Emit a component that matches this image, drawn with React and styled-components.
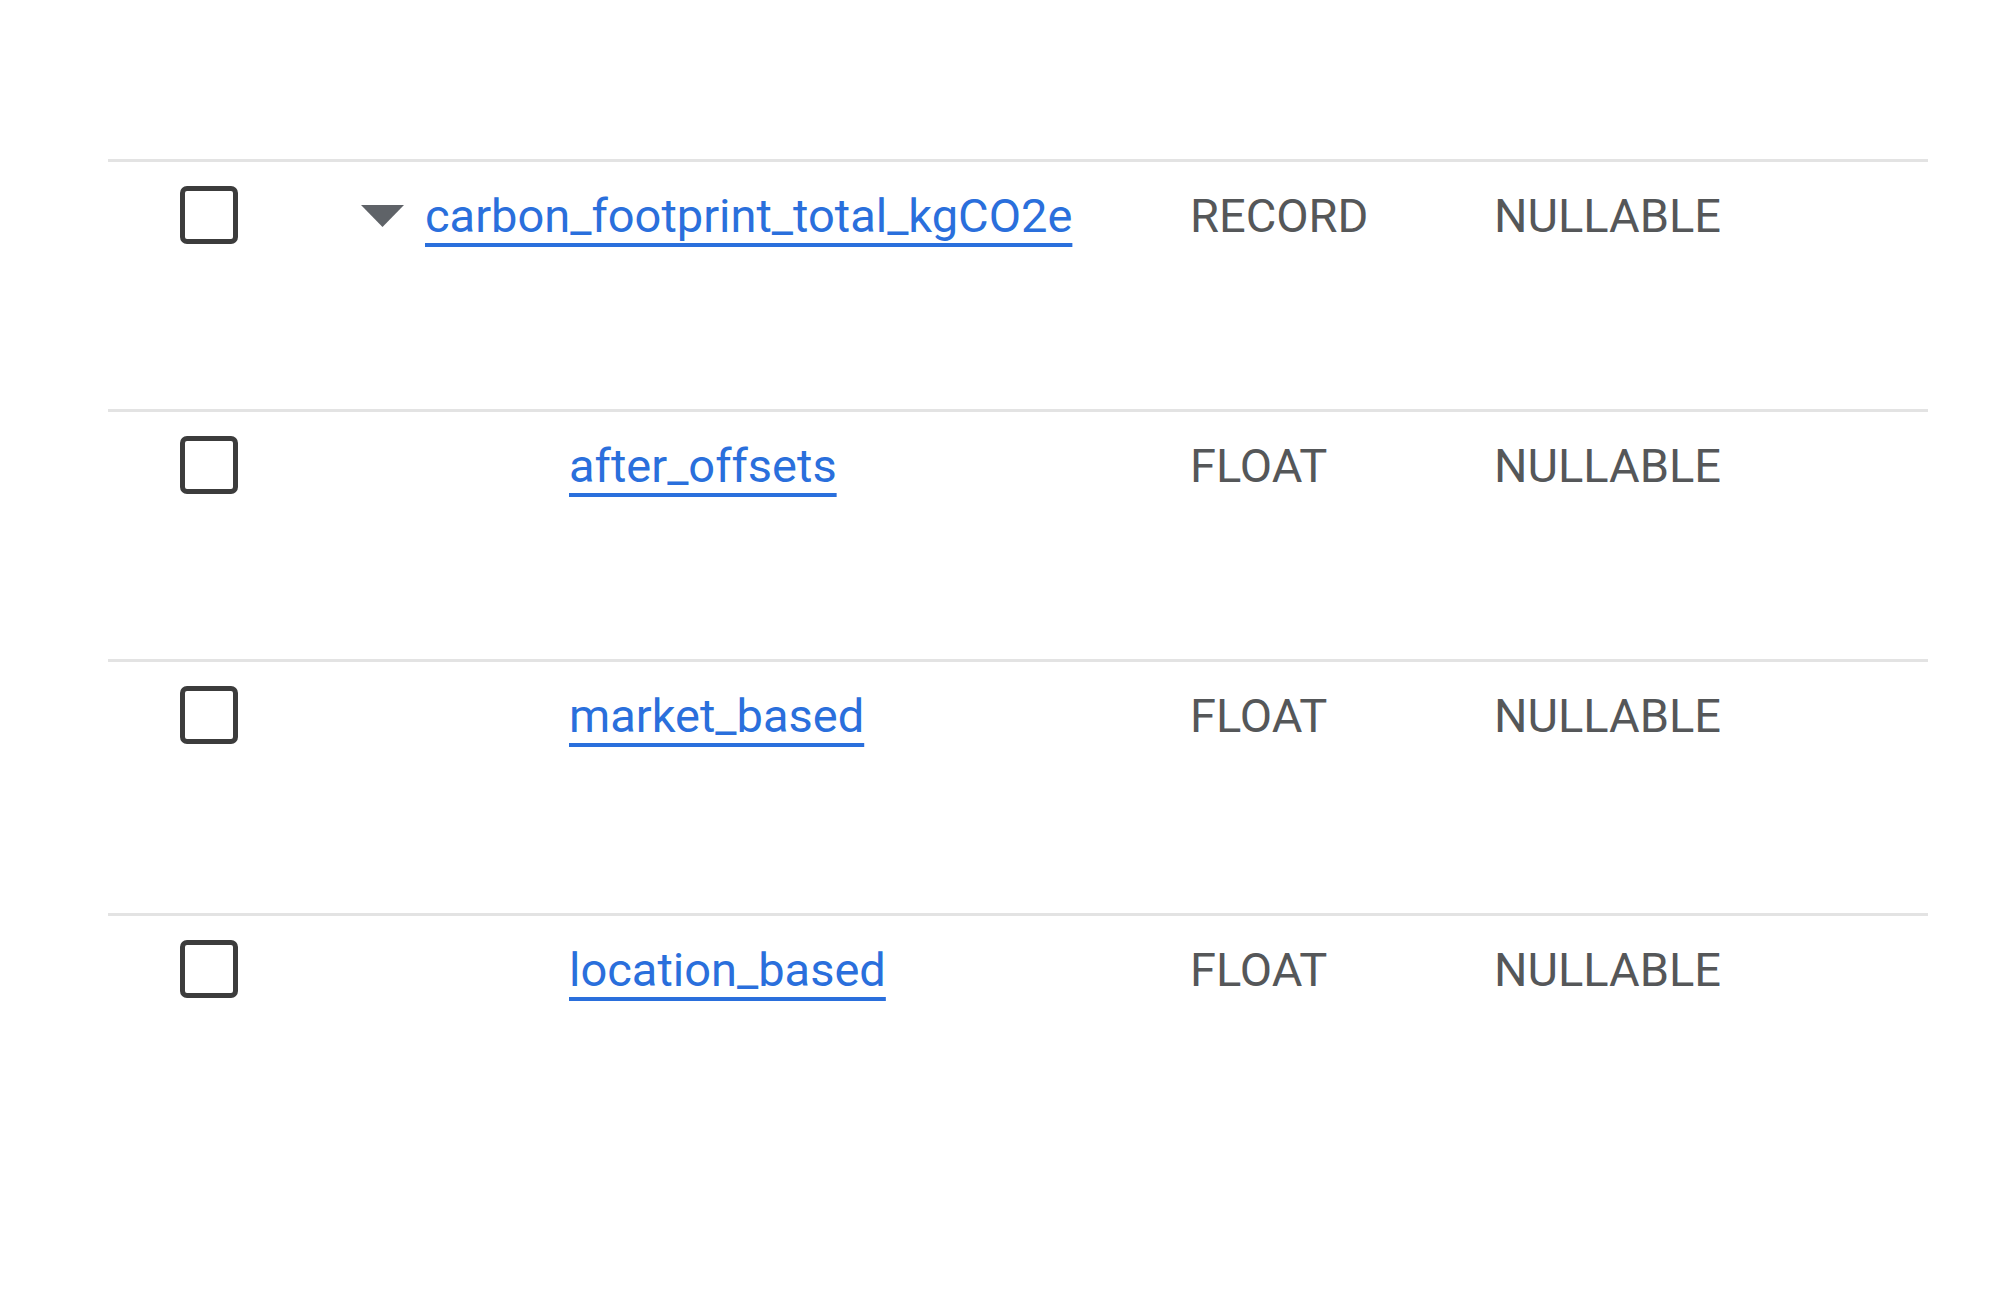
import React from 'react';
import styled, { createGlobalStyle } from 'styled-components';

const GlobalStyle = createGlobalStyle`
  body {
    margin: 0;
    background: #ffffff;
    font-family: Roboto, "Liberation Sans", Arial, sans-serif;
  }
`;

const Page = styled.div`
  width: 2000px;
  height: 1295px;
  padding: 159px 72px 0 108px;
  box-sizing: border-box;
`;

const Table = styled.div`
  display: flex;
  flex-direction: column;
`;

const Row = styled.div`
  display: grid;
  grid-template-columns: 181px 829px 304px 1fr;
  align-items: center;
  align-content: start;
  height: ${(p) => p.height}px;
  box-sizing: border-box;
  border-top: 3px solid #e3e3e3;
  padding: 24px 0 0 72px;
`;

const Checkbox = styled.span`
  display: block;
  width: 58px;
  height: 58px;
  margin-bottom: 1px;
  box-sizing: border-box;
  border: 5px solid #3c3c3c;
  border-radius: 7px;
`;

const NameCell = styled.div`
  display: flex;
  align-items: center;
  gap: 21px;
  padding-left: ${(p) => (p.child ? 208 : 0)}px;
  height: 55px;
`;

const Caret = styled.svg`
  display: block;
  width: 43px;
  height: 22px;
  flex: none;
`;

const FieldLink = styled.a`
  font-size: 47px;
  line-height: 55px;
  color: #2a6fdc;
  text-decoration: underline;
  text-decoration-thickness: 4px;
  text-underline-offset: 11px;
  white-space: nowrap;
  cursor: pointer;
`;

const Cell = styled.div`
  font-size: 47px;
  line-height: 55px;
  color: #555759;
  white-space: nowrap;
`;

const fields = [
  { name: 'carbon_footprint_total_kgCO2e', type: 'RECORD', mode: 'NULLABLE', expandable: true, height: 250 },
  { name: 'after_offsets', type: 'FLOAT', mode: 'NULLABLE', child: true, height: 250 },
  { name: 'market_based', type: 'FLOAT', mode: 'NULLABLE', child: true, height: 254 },
  { name: 'location_based', type: 'FLOAT', mode: 'NULLABLE', child: true, height: 250 },
];

export default function App() {
  return (
    <Page>
      <GlobalStyle />
      <Table>
        {fields.map((f) => (
          <Row key={f.name} height={f.height}>
            <Checkbox />
            <NameCell child={f.child}>
              {f.expandable && (
                <Caret viewBox="0 0 43 22">
                  <path d="M0 0 H43 L21.5 22 Z" fill="#5f6368" />
                </Caret>
              )}
              <FieldLink>{f.name}</FieldLink>
            </NameCell>
            <Cell>{f.type}</Cell>
            <Cell>{f.mode}</Cell>
          </Row>
        ))}
      </Table>
    </Page>
  );
}
